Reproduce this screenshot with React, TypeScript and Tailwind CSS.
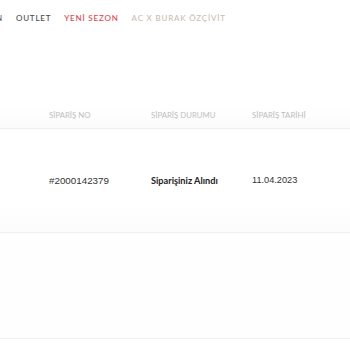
const cols = "grid grid-cols-[102px_101px_98px] pl-[49px]";

export default function App() {
  return (
    <div className="w-[350px] h-[350px] overflow-hidden bg-white font-['Lato',sans-serif]">
      <nav className="h-[36px] flex items-center gap-[13px] -ml-[4px] text-[8px] tracking-[0.1em] font-medium">
        <span className="text-[#555]">N</span>
        <span className="text-[#4a4a4a]">OUTLET</span>
        <span className="text-[#e0444f]">YENİ SEZON</span>
        <span className="text-[#c9c0ae]">AC X BURAK ÖZÇİVİT</span>
      </nav>

      <div className="h-[72px]" />

      <div className="border-b border-[#f0f0f0] bg-gradient-to-b from-white to-[#fbfbfb]">
        <div className={`${cols} h-[16px] items-center text-[7.8px] text-[#bdbdbd] mb-[4px]`}>
          <span>SİPARİŞ NO</span>
          <span>SİPARİŞ DURUMU</span>
          <span>SİPARİŞ TARİHİ</span>
        </div>
      </div>

      <div className="h-[104px] border-b border-[#f0f0f0] bg-gradient-to-b from-white from-70% to-[#fcfcfc]">
        <div className={`${cols} pt-[45px] items-center`}>
          <span className="text-[9.8px] text-[#333] font-['Liberation_Sans',sans-serif]">#2000142379</span>
          <span className="text-[9.2px] font-bold text-[#222]">Siparişiniz Alındı</span>
          <span className="text-[9.2px] text-[#333] font-['Liberation_Sans',sans-serif]">11.04.2023</span>
        </div>
      </div>

      <div className="h-[106px] border-b border-[#f0f0f0] bg-[#fefefe]" />
    </div>
  );
}
